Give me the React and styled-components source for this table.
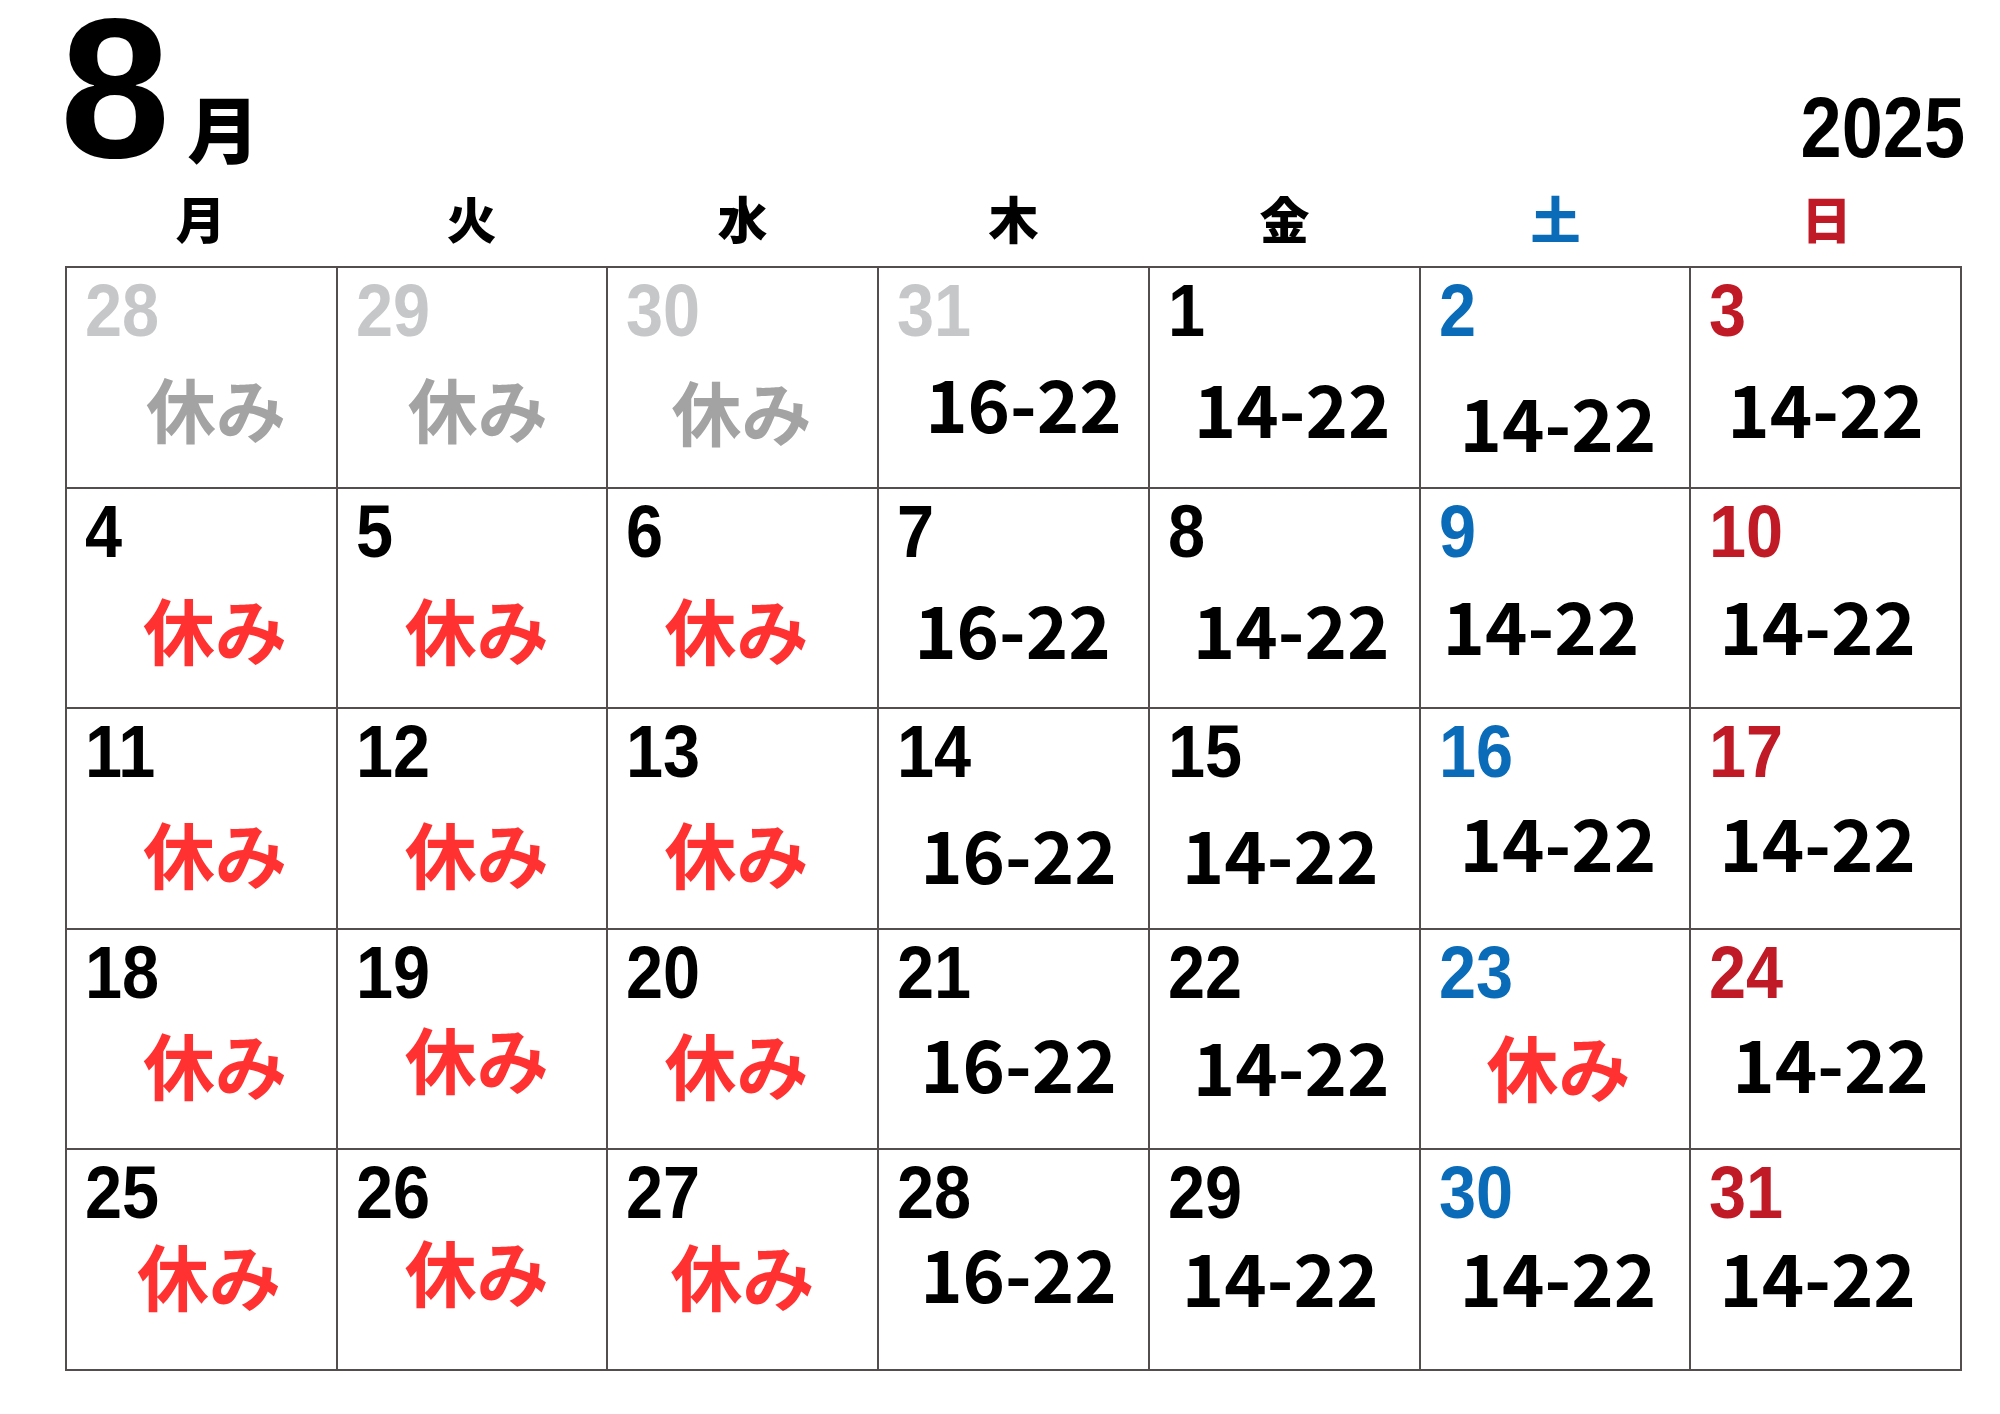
import styled, { createGlobalStyle } from 'styled-components'

const GlobalStyle = createGlobalStyle`
  html, body {
    margin: 0;
    padding: 0;
    background: #fff;
  }
  body {
    font-family: "Noto Sans CJK JP", "Noto Sans", sans-serif;
  }
`

const LINE = '#544d4e'
const JP = '"Noto Sans CJK JP", "Noto Sans", sans-serif'
const NUM = '"Liberation Sans", Arial, sans-serif'

const dateColors = {
  muted: '#c6c7c9',
  plain: '#000',
  sat: '#0a6cb8',
  sun: '#c01a27',
}

const Page = styled.div`
  width: 2000px;
  height: 1414px;
  box-sizing: border-box;
  padding: 0 38px 0 65px;
  overflow: hidden;
`

const Header = styled.header`
  height: 180px;
  display: flex;
  justify-content: space-between;
  align-items: baseline;
`

const MonthBlock = styled.div`
  display: flex;
  align-items: baseline;
`

const BigNum = styled.span`
  font-family: ${NUM};
  font-weight: 700;
  font-size: 198px;
  line-height: 177px;
  margin-left: -5px;
  color: #000;
`

const MonthKanji = styled.span`
  font-family: ${JP};
  font-weight: 900;
  font-size: 72px;
  margin-left: 17px;
  color: #000;
`

const Year = styled.span`
  display: inline-block;
  font-family: ${NUM};
  font-weight: 700;
  font-size: 85px;
  transform: scaleX(0.87);
  transform-origin: right center;
  margin-right: -3px;
  color: #000;
`

const WeekRow = styled.div`
  height: 86px;
  box-sizing: border-box;
  padding-bottom: 12px;
  display: grid;
  grid-template-columns: repeat(7, 1fr);
  align-items: center;
  text-align: center;
`

const WeekLabel = styled.span`
  font-family: ${JP};
  font-weight: 900;
  font-size: 50px;
  line-height: 1;
  color: ${p => p.$color};
`

const Grid = styled.div`
  box-sizing: border-box;
  height: 1105px;
  display: grid;
  grid-template-columns: repeat(7, 1fr);
  grid-template-rows: repeat(5, 1fr);
  border-top: 2px solid ${LINE};
  border-left: 2px solid ${LINE};
`

const Cell = styled.div`
  box-sizing: border-box;
  border-right: 2px solid ${LINE};
  border-bottom: 2px solid ${LINE};
  padding: 6px 0 0 18px;
  overflow: hidden;
`

const DateNum = styled.div`
  display: inline-block;
  font-family: ${NUM};
  font-weight: 700;
  font-size: 74px;
  line-height: 74px;
  height: 74px;
  transform: scaleX(0.9);
  transform-origin: left center;
  color: ${p => dateColors[p.$tone]};
`

const Content = styled.div`
  font-family: ${JP};
  font-weight: 700;
  font-size: ${p => p.$size}px;
  line-height: 1;
  white-space: nowrap;
  margin-left: ${p => p.$ml}px;
  margin-top: ${p => p.$mt}px;
  color: ${p => p.$color};
`

const weekdays = [
  { label: '月', color: '#000' },
  { label: '火', color: '#000' },
  { label: '水', color: '#000' },
  { label: '木', color: '#000' },
  { label: '金', color: '#000' },
  { label: '土', color: '#0a6cb8' },
  { label: '日', color: '#c01a27' },
]

const R = '休み'

// x, y: where the ink of the content starts, measured from the cell's top-left line
const rows = [
  [
    { d: 28, m: true, t: R, x: 82, y: 113 },
    { d: 29, m: true, t: R, x: 73, y: 113 },
    { d: 30, m: true, t: R, x: 66, y: 116 },
    { d: 31, m: true, t: '16-22', x: 52, y: 114 },
    { d: 1, t: '14-22', x: 50, y: 119 },
    { d: 2, t: '14-22', x: 45, y: 133 },
    { d: 3, t: '14-22', x: 42, y: 119 },
  ],
  [
    { d: 4, t: R, x: 79, y: 112 },
    { d: 5, t: R, x: 70, y: 112 },
    { d: 6, t: R, x: 59, y: 112 },
    { d: 7, t: '16-22', x: 41, y: 119 },
    { d: 8, t: '14-22', x: 49, y: 119 },
    { d: 9, t: '14-22', x: 28, y: 115 },
    { d: 10, t: '14-22', x: 34, y: 115 },
  ],
  [
    { d: 11, t: R, x: 79, y: 115 },
    { d: 12, t: R, x: 70, y: 115 },
    { d: 13, t: R, x: 59, y: 115 },
    { d: 14, t: '16-22', x: 47, y: 124 },
    { d: 15, t: '14-22', x: 38, y: 124 },
    { d: 16, t: '14-22', x: 45, y: 112 },
    { d: 17, t: '14-22', x: 34, y: 112 },
  ],
  [
    { d: 18, t: R, x: 79, y: 106 },
    { d: 19, t: R, x: 70, y: 100 },
    { d: 20, t: R, x: 59, y: 106 },
    { d: 21, t: '16-22', x: 47, y: 112 },
    { d: 22, t: '14-22', x: 49, y: 115 },
    { d: 23, t: R, x: 69, y: 108 },
    { d: 24, t: '14-22', x: 47, y: 112 },
  ],
  [
    { d: 25, t: R, x: 73, y: 96 },
    { d: 26, t: R, x: 70, y: 92 },
    { d: 27, t: R, x: 65, y: 96 },
    { d: 28, t: '16-22', x: 47, y: 102 },
    { d: 29, t: '14-22', x: 38, y: 106 },
    { d: 30, t: '14-22', x: 45, y: 106 },
    { d: 31, t: '14-22', x: 34, y: 106 },
  ],
]

function toneFor(cell, col) {
  if (cell.m) return 'muted'
  if (col === 5) return 'sat'
  if (col === 6) return 'sun'
  return 'plain'
}

function DayCell({ cell, col }) {
  const rest = cell.t === R
  const size = rest ? (cell.m ? 70 : 72) : 72
  const inkTop = rest ? 7.5 : 15
  const bearing = rest ? 2 : 5
  const color = rest ? (cell.m ? '#a3a3a3' : '#ff3131') : '#000'
  return (
    <Cell>
      <DateNum $tone={toneFor(cell, col)}>{cell.d}</DateNum>
      <Content
        $size={size}
        $color={color}
        $ml={cell.x - 19 - bearing}
        $mt={cell.y - 81 - inkTop}
      >
        {cell.t}
      </Content>
    </Cell>
  )
}

export default function App() {
  return (
    <Page>
      <GlobalStyle />
      <Header>
        <MonthBlock>
          <BigNum>8</BigNum>
          <MonthKanji>月</MonthKanji>
        </MonthBlock>
        <Year>2025</Year>
      </Header>
      <WeekRow>
        {weekdays.map(w => (
          <WeekLabel key={w.label} $color={w.color}>{w.label}</WeekLabel>
        ))}
      </WeekRow>
      <Grid>
        {rows.map((row, r) =>
          row.map((cell, c) => <DayCell key={`${r}-${c}`} cell={cell} col={c} />)
        )}
      </Grid>
    </Page>
  )
}
